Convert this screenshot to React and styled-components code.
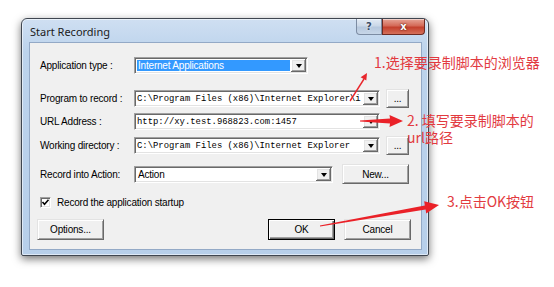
import React from "react";
import styled, { createGlobalStyle } from "styled-components";

const Global = createGlobalStyle`
  html, body { margin: 0; padding: 0; background: #ffffff; }
  body { width: 554px; height: 287px; overflow: hidden; }
  * { box-sizing: border-box; }
`;

const Page = styled.div`
  position: relative;
  width: 554px;
  height: 287px;
  padding: 18px 0 0 21px;
  font-family: "Liberation Sans", Arial, sans-serif;
`;

const Window = styled.div`
  width: 408px;
  height: 238px;
  border: 1px solid #3f4650;
  border-radius: 6px 6px 2px 2px;
  background: linear-gradient(180deg, #cfdff2 0%, #bcd3ec 14%, #b7cfea 100%);
  box-shadow: 0 3px 9px rgba(0, 0, 0, 0.55), inset 0 0 0 1px rgba(255, 255, 255, 0.55);
  display: flex;
  flex-direction: column;
`;

const TitleBar = styled.div`
  height: 23px;
  display: flex;
  justify-content: space-between;
  align-items: flex-start;
  padding: 0 3px 0 8px;
`;

const Title = styled.div`
  font-family: "Noto Sans", "Liberation Sans", sans-serif;
  font-size: 11px;
  color: #1b1b1b;
  padding-top: 5px;
`;

const Caption = styled.div`
  display: flex;
`;

const CapButton = styled.div`
  height: 16px;
  width: ${(p) => p.$w}px;
  display: flex;
  align-items: center;
  justify-content: center;
  font-family: "DejaVu Sans", sans-serif;
  font-weight: bold;
  border: 1px solid ${(p) => (p.$close ? "#6e2a22" : "#7c8ca3")};
  border-top: none;
  border-radius: ${(p) => (p.$close ? "0 0 4px 0" : "0 0 0 4px")};
  background: ${(p) =>
    p.$close
      ? "linear-gradient(180deg, #e6a597 0%, #d46a58 45%, #c3402d 55%, #d5705a 100%)"
      : "linear-gradient(180deg, #e3ebf5 0%, #cbd8e8 45%, #b6c8de 55%, #c7d6e8 100%)"};
  color: ${(p) => (p.$close ? "#ffffff" : "#3a4c66")};
  font-size: 10px;
  text-shadow: ${(p) =>
    p.$close ? "0 0 2px #5a1a12, 0 0 1px #5a1a12" : "0 0 2px #ffffff"};
  box-shadow: inset 0 1px 0 rgba(255, 255, 255, 0.5);
`;

const Frame = styled.div`
  flex: 1;
  padding: 0 6px 5px 7px;
  display: flex;
`;

const Client = styled.div`
  flex: 1;
  background: #f0f0f0;
  border: 1px solid #93a9c6;
  padding: 0 10px 9px 10px;
  display: flex;
  flex-direction: column;
  font-size: 10px;
  letter-spacing: -0.2px;
  color: #000;
`;

const Row = styled.div`
  display: flex;
  align-items: center;
  height: ${(p) => p.$h}px;
  margin-top: ${(p) => p.$mt}px;
`;

const Label = styled.div`
  width: 94px;
  flex: none;
  white-space: nowrap;
`;

const Field = styled.div`
  width: ${(p) => p.$w}px;
  height: 17px;
  flex: none;
  display: flex;
  align-items: stretch;
  background: #ffffff;
  border: 1px solid;
  border-color: #a0a0a0 #ffffff #ffffff #a0a0a0;
  box-shadow: inset 1px 1px 0 #696969, inset -1px -1px 0 #e3e3e3;
  padding: 2px;
`;

const FieldText = styled.div`
  flex: 1;
  min-width: 0;
  display: flex;
  align-items: center;
  padding-left: ${(p) => (p.$mono ? "0" : "1px")};
  overflow: hidden;
  white-space: nowrap;
  font-family: ${(p) => (p.$mono ? '"Liberation Mono", "Courier New", monospace' : "inherit")};
  font-size: ${(p) => (p.$mono ? "8.9px" : "10px")};
  letter-spacing: ${(p) => (p.$mono ? "0" : "-0.2px")};
  background: ${(p) => (p.$selected ? "#3399ff" : "transparent")};
  color: ${(p) => (p.$selected ? "#ffffff" : "#000000")};
  margin-right: ${(p) => (p.$selected ? "1px" : "0")};
`;

const DropButton = styled.div`
  width: 15px;
  flex: none;
  margin: -1px -1px -1px 0;
  background: #f0f0f0;
  box-shadow: inset -1px -1px 0 #696969, inset 1px 1px 0 #ffffff,
    inset -2px -2px 0 #a0a0a0, inset 2px 2px 0 #e3e3e3;
  display: flex;
  align-items: center;
  justify-content: center;
  &::after {
    content: "";
    border-left: 3.5px solid transparent;
    border-right: 3.5px solid transparent;
    border-top: 4px solid #000;
    margin-top: 1px;
  }
`;

const Button = styled.div`
  width: ${(p) => p.$w}px;
  height: ${(p) => p.$h || 21}px;
  flex: none;
  display: flex;
  align-items: center;
  justify-content: center;
  background: #f0f0f0;
  border: 1px solid;
  border-color: ${(p) =>
    p.$default ? "#000 #000 #000 #000" : "#e3e3e3 #696969 #696969 #e3e3e3"};
  box-shadow: ${(p) =>
    p.$default
      ? "inset 1px 1px 0 #ffffff, inset -1px -1px 0 #696969, inset -2px -2px 0 #a0a0a0"
      : "inset 1px 1px 0 #ffffff, inset -1px -1px 0 #a0a0a0"};
  font-size: 10px;
  letter-spacing: -0.2px;
  margin-left: ${(p) => p.$ml || 0}px;
`;

const Spacer = styled.div`
  flex: 1;
`;

const CheckBox = styled.div`
  width: 11px;
  height: 11px;
  flex: none;
  background: #fff;
  border: 1px solid;
  border-color: #a0a0a0 #ffffff #ffffff #a0a0a0;
  box-shadow: inset 1px 1px 0 #696969, inset -1px -1px 0 #e3e3e3;
  display: flex;
  align-items: center;
  justify-content: center;
  margin-right: 6px;
`;

const Note = styled.div`
  position: absolute;
  left: ${(p) => p.$x}px;
  top: ${(p) => p.$y}px;
  font-family: "Noto Sans CJK SC", "Noto Sans", sans-serif;
  font-size: 14px;
  line-height: 17px;
  color: #e23a3f;
  white-space: nowrap;
`;

const Overlay = styled.svg`
  position: absolute;
  left: 0;
  top: 0;
  pointer-events: none;
`;

function Combo({ w, text, mono, selected }) {
  return (
    <Field $w={w}>
      <FieldText $mono={mono} $selected={selected}>
        {text}
      </FieldText>
      <DropButton />
    </Field>
  );
}

export default function App() {
  return (
    <Page>
      <Global />
      <Window>
        <TitleBar>
          <Title>Start Recording</Title>
          <Caption>
            <CapButton $w={26}>?</CapButton>
            <CapButton $w={43} $close>
              x
            </CapButton>
          </Caption>
        </TitleBar>
        <Frame>
          <Client>
            <Row $h={17} $mt={14}>
              <Label>Application type :</Label>
              <Combo w={174} text="Internet Applications" selected />
            </Row>
            <Row $h={19} $mt={15}>
              <Label>Program to record :</Label>
              <Combo w={246} mono text="C:\Program Files (x86)\Internet Explorer\i" />
              <Button $w={23} $h={19} $ml={6}>...</Button>
            </Row>
            <Row $h={19} $mt={4}>
              <Label>URL Address :</Label>
              <Combo w={246} mono text="http://xy.test.968823.com:1457" />
            </Row>
            <Row $h={19} $mt={5}>
              <Label>Working directory :</Label>
              <Combo w={246} mono text="C:\Program Files (x86)\Internet Explorer" />
              <Button $w={23} $h={19} $ml={6}>...</Button>
            </Row>
            <Row $h={20} $mt={9}>
              <Label>Record into Action:</Label>
              <Combo w={199} text="Action" />
              <Button $w={67} $h={20} $ml={9}>New...</Button>
            </Row>
            <Row $h={12} $mt={12}>
              <CheckBox>
                <svg width="9" height="9" viewBox="0 0 9 9">
                  <path d="M1.5 4 L3.5 6.2 L7.5 1.8" stroke="#000" strokeWidth="1.6" fill="none" />
                </svg>
              </CheckBox>
              Record the application startup
            </Row>
            <Row $h={21} $mt={11}>
              <Button $w={67} $ml={-3}>Options...</Button>
              <Spacer />
              <Button $w={67} $default>OK</Button>
              <Button $w={67} $ml={9}>Cancel</Button>
            </Row>
          </Client>
        </Frame>
      </Window>

      <Note $x={374} $y={54}>1.选择要录制脚本的浏览器</Note>
      <Note $x={407} $y={112}>
        2. 填写要录制脚本的
        <br />
        url路径
      </Note>
      <Note $x={447} $y={193}>3.点击OK按钮</Note>

      <Overlay width="554" height="287" viewBox="0 0 554 287">
        <line x1="350" y1="101" x2="364" y2="79" stroke="#e8262c" strokeWidth="1.4" />
        <polygon points="367,73 366.3,80.6 360.6,77.3" fill="#e8262c" />
        <polygon
          points="360,120.4 390,118.6 389.5,115 403,121 389.5,127 390,123.4 360,121.6"
          fill="#ea2128"
        />
        <polygon
          points="319.9,225.5 424.8,205.4 424.2,201.3 439,205 426.2,213.4 425.6,209.4 320.1,226.6"
          fill="#ea2128"
        />
      </Overlay>
    </Page>
  );
}
